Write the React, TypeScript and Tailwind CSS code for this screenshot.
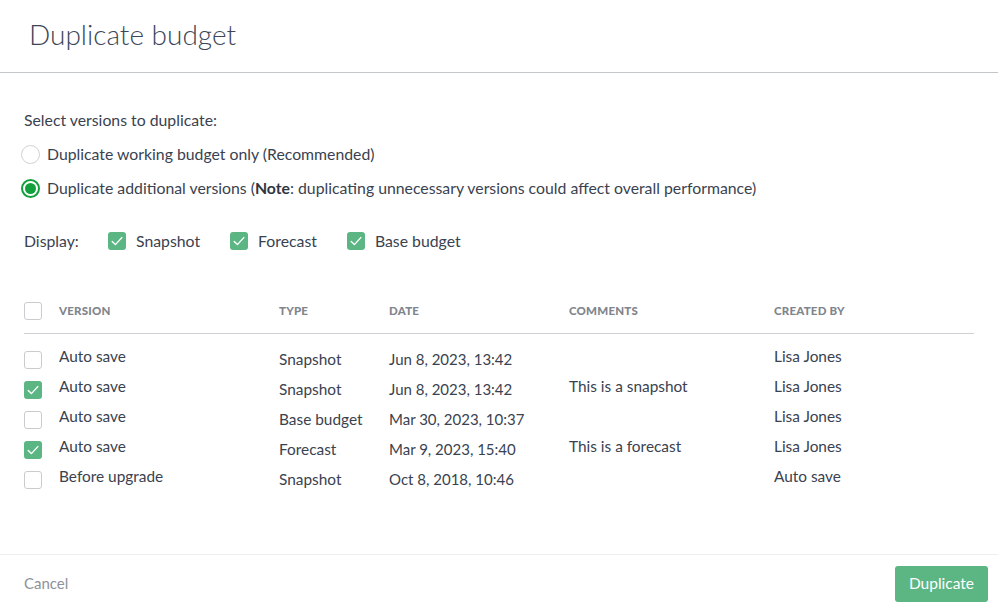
import React from "react";

const font = { fontFamily: "Lato, 'Open Sans', sans-serif" };

function Check({ checked }: { checked: boolean }) {
  if (checked) {
    return (
      <span className="block h-[18px] w-[18px] rounded-[3px] bg-[#5cb684]">
        <svg width="18" height="18" viewBox="0 0 18 18" fill="none">
          <path d="M4.2 9.6 L7.4 12.6 L13.8 5.6" stroke="white" strokeWidth="1.4" strokeLinecap="round" strokeLinejoin="round" />
        </svg>
      </span>
    );
  }
  return <span className="block h-[18px] w-[18px] rounded-[3px] border border-[#c9cccf] bg-white" />;
}

function Radio({ checked }: { checked: boolean }) {
  if (checked) {
    return (
      <span className="flex h-[19px] w-[19px] items-center justify-center rounded-full border-2 border-[#12a03c] bg-white">
        <span className="block h-[11px] w-[11px] rounded-full bg-[#12a03c]" />
      </span>
    );
  }
  return <span className="block h-[19px] w-[19px] rounded-full border border-[#cfd2d5] bg-white" />;
}

const rows = [
  { checked: false, version: "Auto save", type: "Snapshot", date: "Jun 8, 2023, 13:42", comment: "", by: "Lisa Jones" },
  { checked: true, version: "Auto save", type: "Snapshot", date: "Jun 8, 2023, 13:42", comment: "This is a snapshot", by: "Lisa Jones" },
  { checked: false, version: "Auto save", type: "Base budget", date: "Mar 30, 2023, 10:37", comment: "", by: "Lisa Jones" },
  { checked: true, version: "Auto save", type: "Forecast", date: "Mar 9, 2023, 15:40", comment: "This is a forecast", by: "Lisa Jones" },
  { checked: false, version: "Before upgrade", type: "Snapshot", date: "Oct 8, 2018, 10:46", comment: "", by: "Auto save" },
];

const cols = "grid grid-cols-[35px_220px_110px_180px_205px_200px]";
const th = "text-[11.5px] font-black uppercase tracking-[0.2px] text-[#80858d]";

export default function App() {
  return (
    <div className="flex h-[610px] w-[998px] flex-col bg-white text-[#3a4250]" style={font}>
      <div className="h-[73px] border-b border-[#c4c7ca] pl-[29px] pt-[17px]">
        <h1 className="text-[28px] font-light leading-[34px] text-[#3c4657]">Duplicate budget</h1>
      </div>
      <div className="flex-1 px-[24px] text-[15.8px]">
        <div className="mt-[37px] leading-[20px]">Select versions to duplicate:</div>
        <div className="-ml-[3px] mt-[14px] flex items-center gap-[7px] leading-[20px]">
          <Radio checked={false} />
          <span>Duplicate working budget only (Recommended)</span>
        </div>
        <div className="-ml-[3px] mt-[14px] flex items-center gap-[7px] leading-[20px]">
          <Radio checked={true} />
          <span>
            Duplicate additional versions (<b className="font-bold text-[#2f3540]">Note</b>: duplicating unnecessary versions could affect overall performance)
          </span>
        </div>
        <div className="mt-[33px] flex items-center leading-[20px]">
          <span className="w-[84px]">Display:</span>
          <span className="flex items-center gap-[10px]">
            <Check checked />
            <span>Snapshot</span>
          </span>
          <span className="ml-[30px] flex items-center gap-[10px]">
            <Check checked />
            <span>Forecast</span>
          </span>
          <span className="ml-[30px] flex items-center gap-[10px]">
            <Check checked />
            <span>Base budget</span>
          </span>
        </div>
        <div className="mt-[51px] w-[950px] text-[15.4px]">
          <div className={`${cols} items-center border-b border-[#cfd2d5] pb-[13px]`}>
            <Check checked={false} />
            <span className={th}>Version</span>
            <span className={th}>Type</span>
            <span className={th}>Date</span>
            <span className={th}>Comments</span>
            <span className={th}>Created by</span>
          </div>
          <div className="pt-[12px]">
            {rows.map((r, i) => (
              <div key={i} className={`${cols} h-[30px] leading-[20px]`}>
                <span className="pt-[5px]">
                  <Check checked={r.checked} />
                </span>
                <span>{r.version}</span>
                <span className="pt-[3px]">{r.type}</span>
                <span className="pt-[3px] text-[15px]">{r.date}</span>
                <span>{r.comment}</span>
                <span>{r.by}</span>
              </div>
            ))}
          </div>
        </div>
      </div>
      <div className="flex h-[56px] items-center justify-between border-t border-[#eeeeee] pl-[24px] pr-[10px] pt-[2px]">
        <span className="text-[15px] text-[#8d929b]">Cancel</span>
        <button className="h-[36px] rounded-[3px] bg-[#5cb684] px-[14px] text-[15.5px] text-white">Duplicate</button>
      </div>
    </div>
  );
}
